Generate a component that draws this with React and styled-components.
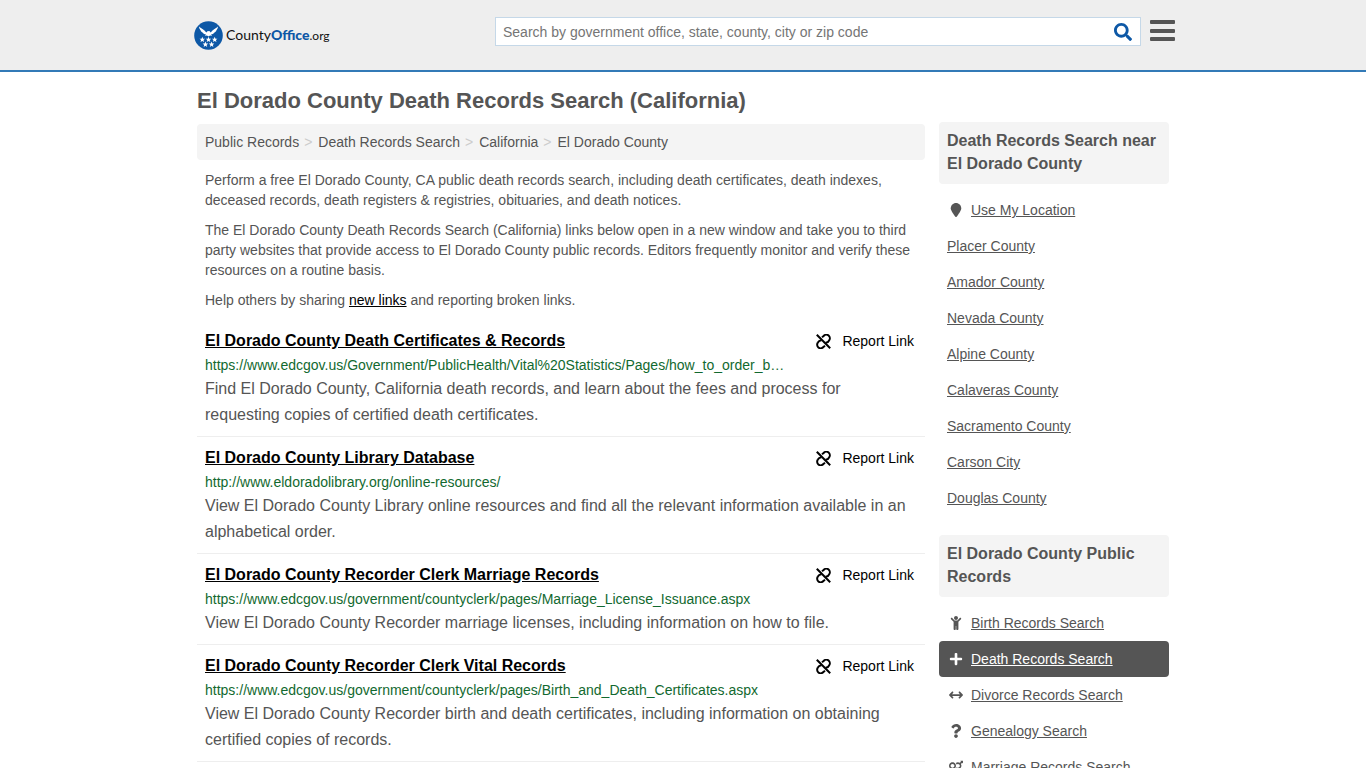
import React from "react";
import styled, { createGlobalStyle } from "styled-components";
import { FaArrowsLeftRight, FaLocationPin } from "react-icons/fa6";
import { FaChild, FaPlus, FaQuestion, FaSearch, FaVenusMars } from "react-icons/fa";

const GlobalStyle = createGlobalStyle`
  *, *::before, *::after { box-sizing: border-box; }
  body {
    margin: 0;
    background: #fff;
    color: #555;
    font-family: "Liberation Sans", Arial, sans-serif;
    font-size: 14px;
    line-height: 20px;
  }
`;

const Header = styled.header`
  background: #eee;
  border-bottom: 2px solid #337ab7;
`;

const HeaderInner = styled.div`
  display: flex;
  align-items: flex-start;
  max-width: 984px;
  min-height: 70px;
  margin: 0 auto;
  padding: 17px 0 0 3px;
`;

const LogoLink = styled.a`
  display: flex;
  align-items: center;
  gap: 3px;
  flex: 0 0 301px;
  height: 36px;
  color: #111;
  text-decoration: none;
  font-family: Lato, sans-serif;
  font-size: 14px;

  svg {
    flex: none;
  }
  strong {
    color: #0d58a6;
    font-weight: 900;
  }
  small {
    font-size: 12px;
    font-weight: 400;
  }
`;

const SearchForm = styled.form`
  display: flex;
  flex: 1;
  min-width: 0;
  height: 29px;
  background: #fff;
  border: 1px solid #c5d8e8;
`;

const SearchInput = styled.input`
  flex: 1;
  min-width: 0;
  padding: 0 7px;
  border: 0;
  outline: 0;
  background: transparent;
  color: #555;
  font: inherit;

  &::placeholder {
    color: #757575;
    opacity: 1;
  }
`;

const IconButton = styled.button`
  display: flex;
  align-items: center;
  justify-content: center;
  flex: none;
  width: ${(p) => p.$width}px;
  padding: 0;
  border: 0;
  background: transparent;
  color: ${(p) => p.$color};
  font-size: 18px;
  cursor: pointer;
`;

const MenuButton = styled(IconButton)`
  height: 28px;
  margin-left: 8px;
`;

const Page = styled.div`
  max-width: 972px;
  margin: 0 auto;
`;

const PageTitle = styled.h1`
  margin: 0;
  padding: 16px 0 8px;
  font-size: 22px;
  line-height: 26px;
`;

const Columns = styled.div`
  display: flex;
  align-items: flex-start;
  gap: 14px;
`;

const Main = styled.main`
  flex: 1;
  min-width: 0;
  padding-top: 2px;
`;

const Breadcrumb = styled.nav`
  padding: 8px;
  border-radius: 4px;
  background: #f4f4f4;

  ol {
    display: flex;
    flex-wrap: wrap;
    margin: 0;
    padding: 0;
    list-style: none;
  }
  li + li::before {
    content: ">";
    padding: 0 6px 0 5px;
    color: #ccc;
  }
  a {
    color: inherit;
    text-decoration: none;
  }
`;

const Intro = styled.p`
  margin: 10px 8px;

  a {
    color: #000;
  }
`;

const Results = styled.ul`
  margin: 0;
  padding: 0;
  list-style: none;
`;

const Result = styled.li`
  padding: 8px;
  border-bottom: 1px solid #eee;
`;

const ResultHead = styled.div`
  display: flex;
  align-items: center;
  justify-content: space-between;
  padding-right: 3px;
`;

const ResultTitle = styled.h2`
  margin: 0;
  font-size: 16px;
  line-height: 26px;

  a {
    color: #000;
  }
`;

const ReportButton = styled.button`
  display: flex;
  align-items: center;
  gap: 11px;
  flex: none;
  padding: 0;
  border: 0;
  background: transparent;
  color: #000;
  font: inherit;
  cursor: pointer;
`;

const ResultUrl = styled.div`
  max-width: 580px;
  overflow: hidden;
  color: #12692f;
  line-height: 22px;
  text-overflow: ellipsis;
  white-space: nowrap;
`;

const ResultText = styled.p`
  margin: 0;
  font-size: 16px;
  line-height: 26px;
`;

const Sidebar = styled.aside`
  flex: 0 0 230px;
`;

const SideSection = styled.section`
  margin-bottom: 19px;
`;

const SideTitle = styled.h2`
  margin: 0 0 8px;
  padding: 7px 8px 9px;
  border-radius: 4px;
  background: #f4f4f4;
  font-size: 16px;
  line-height: 23px;
`;

const SideList = styled.ul`
  margin: 0;
  padding: 0;
  list-style: none;
`;

const SideLink = styled.a`
  display: flex;
  align-items: center;
  padding: 8px;
  border-radius: 4px;
  background: ${(p) => (p.$active ? "#555" : "transparent")};
  color: ${(p) => (p.$active ? "#fff" : "#555")};
`;

const SideIcon = styled.span`
  display: flex;
  justify-content: center;
  flex: none;
  width: 18px;
  margin-right: 6px;
  font-size: 14px;
`;

const STAR = "M0-2.9L.8-.9 2.8-.8 1.2.5 1.8 2.5 0 1.3-1.8 2.5-1.2.5-2.8-.8-.8-.9Z";
const STARS = [
  [8.3, 18.6],
  [14.5, 18.6],
  [20.7, 18.6],
  [11.4, 23.4],
  [17.6, 23.4],
];

function Emblem() {
  return (
    <svg width="29" height="29" viewBox="0 0 29 29" aria-hidden="true">
      <circle cx="14.5" cy="14.5" r="14.3" fill="#0d58a6" />
      <g fill="#fff">
        <path d="M5 5.6C6.6 7.6 10.2 8.6 12.3 11.4L13.4 10.2 15.4 9.9 16.7 11.4C18.8 8.6 22.4 7.6 24 5.6C23.8 7.4 23.2 8.4 22.4 9.2C22.3 10.2 21.5 11 20.5 11.4C19.7 12.7 18.2 13.2 17 13.4L18.2 14.8 16 14.4 14.5 15.6 13 14.4 10.8 14.8 12 13.4C10.8 13.2 9.3 12.7 8.5 11.4C7.5 11 6.7 10.2 6.6 9.2C5.8 8.4 5.2 7.4 5 5.6Z" />
        {STARS.map(([x, y]) => (
          <path key={`${x}-${y}`} d={STAR} transform={`translate(${x} ${y})`} />
        ))}
      </g>
    </svg>
  );
}

function BrokenLinkIcon() {
  return (
    <svg
      width="15"
      height="15"
      viewBox="0 0 15 15"
      fill="none"
      stroke="currentColor"
      strokeWidth="2"
      aria-hidden="true"
    >
      <path d="M.8 .8L14.2 14.2" />
      <path d="M6 3.3L7.6 2A3.5 3.5 0 0 1 13 6.6C12.6 7.6 11.4 8.6 9.6 8.8" />
      <path d="M5.4 6.2C3.6 6.4 2.4 7.4 2 8.4A3.5 3.5 0 0 0 7.4 13L9 11.7" />
    </svg>
  );
}

const crumbs = ["Public Records", "Death Records Search", "California", "El Dorado County"];

const results = [
  {
    title: "El Dorado County Death Certificates & Records",
    url: "https://www.edcgov.us/Government/PublicHealth/Vital%20Statistics/Pages/how_to_order_birth_death_certificates.aspx",
    text: "Find El Dorado County, California death records, and learn about the fees and process for requesting copies of certified death certificates.",
  },
  {
    title: "El Dorado County Library Database",
    url: "http://www.eldoradolibrary.org/online-resources/",
    text: "View El Dorado County Library online resources and find all the relevant information available in an alphabetical order.",
  },
  {
    title: "El Dorado County Recorder Clerk Marriage Records",
    url: "https://www.edcgov.us/government/countyclerk/pages/Marriage_License_Issuance.aspx",
    text: "View El Dorado County Recorder marriage licenses, including information on how to file.",
  },
  {
    title: "El Dorado County Recorder Clerk Vital Records",
    url: "https://www.edcgov.us/government/countyclerk/pages/Birth_and_Death_Certificates.aspx",
    text: "View El Dorado County Recorder birth and death certificates, including information on obtaining certified copies of records.",
  },
];

const nearby = [
  { label: "Use My Location", Icon: FaLocationPin },
  { label: "Placer County" },
  { label: "Amador County" },
  { label: "Nevada County" },
  { label: "Alpine County" },
  { label: "Calaveras County" },
  { label: "Sacramento County" },
  { label: "Carson City" },
  { label: "Douglas County" },
];

const records = [
  { label: "Birth Records Search", Icon: FaChild },
  { label: "Death Records Search", Icon: FaPlus, active: true },
  { label: "Divorce Records Search", Icon: FaArrowsLeftRight },
  { label: "Genealogy Search", Icon: FaQuestion },
  { label: "Marriage Records Search", Icon: FaVenusMars },
];

function SideNav({ title, items }) {
  return (
    <SideSection>
      <SideTitle>{title}</SideTitle>
      <SideList>
        {items.map(({ label, Icon, active }) => (
          <li key={label}>
            <SideLink href="#" $active={active} aria-current={active ? "page" : undefined}>
              {Icon && (
                <SideIcon>
                  <Icon aria-hidden="true" />
                </SideIcon>
              )}
              {label}
            </SideLink>
          </li>
        ))}
      </SideList>
    </SideSection>
  );
}

export default function App() {
  return (
    <>
      <GlobalStyle />
      <Header>
        <HeaderInner>
          <LogoLink href="#">
            <Emblem />
            <span>
              County<strong>Office</strong>
              <small>.org</small>
            </span>
          </LogoLink>
          <SearchForm role="search" onSubmit={(e) => e.preventDefault()}>
            <SearchInput
              type="text"
              aria-label="Search"
              placeholder="Search by government office, state, county, city or zip code"
            />
            <IconButton type="submit" aria-label="Submit search" $width={34} $color="#0d58a6">
              <FaSearch />
            </IconButton>
          </SearchForm>
          <MenuButton type="button" aria-label="Menu" $width={26} $color="#555">
            <svg width="26" height="22" viewBox="0 0 26 22" fill="currentColor" aria-hidden="true">
              <rect x="1" y="0" width="25" height="4" rx="1" />
              <rect x="1" y="9" width="25" height="4" rx="1" />
              <rect x="1" y="17" width="25" height="4" rx="1" />
            </svg>
          </MenuButton>
        </HeaderInner>
      </Header>
      <Page>
        <PageTitle>El Dorado County Death Records Search (California)</PageTitle>
        <Columns>
          <Main>
            <Breadcrumb aria-label="Breadcrumb">
              <ol>
                {crumbs.map((crumb) => (
                  <li key={crumb}>
                    <a href="#">{crumb}</a>
                  </li>
                ))}
              </ol>
            </Breadcrumb>
            <Intro>
              Perform a free El Dorado County, CA public death records search, including death
              certificates, death indexes, deceased records, death registers &amp; registries,
              obituaries, and death notices.
            </Intro>
            <Intro>
              The El Dorado County Death Records Search (California) links below open in a new
              window and take you to third party websites that provide access to El Dorado County
              public records. Editors frequently monitor and verify these resources on a routine
              basis.
            </Intro>
            <Intro>
              Help others by sharing <a href="#">new links</a> and reporting broken links.
            </Intro>
            <Results>
              {results.map((r) => (
                <Result key={r.title}>
                  <ResultHead>
                    <ResultTitle>
                      <a href="#">{r.title}</a>
                    </ResultTitle>
                    <ReportButton type="button">
                      <BrokenLinkIcon />
                      Report Link
                    </ReportButton>
                  </ResultHead>
                  <ResultUrl>{r.url}</ResultUrl>
                  <ResultText>{r.text}</ResultText>
                </Result>
              ))}
            </Results>
          </Main>
          <Sidebar>
            <SideNav title="Death Records Search near El Dorado County" items={nearby} />
            <SideNav title="El Dorado County Public Records" items={records} />
          </Sidebar>
        </Columns>
      </Page>
    </>
  );
}
